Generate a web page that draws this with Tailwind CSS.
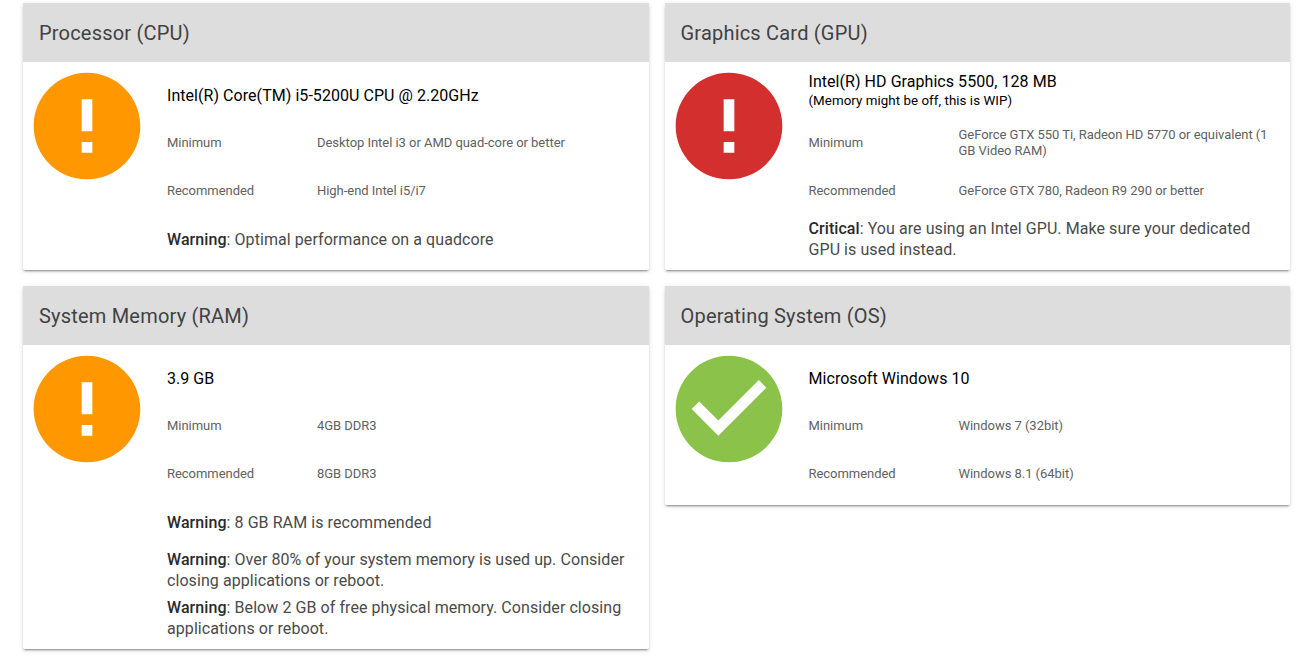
<!DOCTYPE html>
<html lang="en">
<head>
    <meta charset="UTF-8">
    <title>System Requirements</title>
    <script src="https://cdn.jsdelivr.net/npm/@tailwindcss/browser@4"></script>
</head>
<body class="bg-white font-['Roboto',sans-serif] min-h-[659px]">
    <div class="grid grid-cols-2 gap-x-4 gap-y-4 items-start pl-[23px] pr-[10px] pt-[3px]">

        <!-- CPU -->
        <section class="h-[267px] bg-white rounded-[2px] shadow-[0_2px_2px_0_rgba(0,0,0,.14),0_3px_1px_-2px_rgba(0,0,0,.2),0_1px_5px_0_rgba(0,0,0,.12)]">
            <h2 class="h-[59px] px-4 flex items-center bg-[#dddddd] text-[20px] tracking-[0.2px] text-[#424242]">Processor (CPU)</h2>
            <div class="flex">
                <svg class="w-32 h-32 shrink-0 fill-[#ff9800]" viewBox="0 0 24 24"><path d="M12 2C6.48 2 2 6.48 2 12s4.48 10 10 10 10-4.48 10-10S17.52 2 12 2zm1 15h-2v-2h2v2zm0-4h-2V7h2v6z"/></svg>
                <div class="flex-1 pl-4 pr-[10px] pt-[9px]">
                    <div class="h-12 pt-[15px] text-[16px] leading-[20px] tracking-[0.05px] text-black">Intel(R) Core(TM) i5-5200U CPU @ 2.20GHz</div>
                    <div class="grid grid-cols-[150px_1fr] auto-rows-[48px] items-center text-[13px] leading-4 tracking-[-0.04px] text-[#616161]">
                        <div>Minimum</div><div>Desktop Intel i3 or AMD quad-core or better</div>
                        <div>Recommended</div><div>High-end Intel i5/i7</div>
                    </div>
                    <p class="mt-[14px] text-[16px] leading-[21px] tracking-[0.07px] text-[#4a4a4a]"><b class="font-medium text-[#2a2a2a]">Warning</b>: Optimal performance on a quadcore</p>
                </div>
            </div>
        </section>

        <!-- GPU -->
        <section class="h-[267px] bg-white rounded-[2px] shadow-[0_2px_2px_0_rgba(0,0,0,.14),0_3px_1px_-2px_rgba(0,0,0,.2),0_1px_5px_0_rgba(0,0,0,.12)]">
            <h2 class="h-[59px] px-4 flex items-center bg-[#dddddd] text-[20px] tracking-[0.2px] text-[#424242]">Graphics Card (GPU)</h2>
            <div class="flex">
                <svg class="w-32 h-32 shrink-0 fill-[#d32f2f]" viewBox="0 0 24 24"><path d="M12 2C6.48 2 2 6.48 2 12s4.48 10 10 10 10-4.48 10-10S17.52 2 12 2zm1 15h-2v-2h2v2zm0-4h-2V7h2v6z"/></svg>
                <div class="flex-1 pl-4 pr-[10px] pt-[9px]">
                    <div class="h-12 pt-px text-[16px] tracking-[0.05px] text-black leading-[20px]">
                        <div>Intel(R) HD Graphics 5500, 128 MB</div>
                        <div class="text-[13.33px] leading-[18px]">(Memory might be off, this is WIP)</div>
                    </div>
                    <div class="grid grid-cols-[150px_1fr] auto-rows-[48px] items-center text-[13px] leading-4 tracking-[-0.04px] text-[#616161]">
                        <div>Minimum</div><div>GeForce GTX 550 Ti, Radeon HD 5770 or equivalent (1 GB Video RAM)</div>
                        <div>Recommended</div><div>GeForce GTX 780, Radeon R9 290 or better</div>
                    </div>
                    <p class="mt-[3px] text-[16px] leading-[21px] tracking-[0.07px] text-[#4a4a4a]"><b class="font-medium text-[#2a2a2a]">Critical</b>: You are using an Intel GPU. Make sure your dedicated GPU is used instead.</p>
                </div>
            </div>
        </section>

        <!-- RAM -->
        <section class="bg-white rounded-[2px] pb-[10px] shadow-[0_2px_2px_0_rgba(0,0,0,.14),0_3px_1px_-2px_rgba(0,0,0,.2),0_1px_5px_0_rgba(0,0,0,.12)]">
            <h2 class="h-[59px] px-4 flex items-center bg-[#dddddd] text-[20px] tracking-[0.2px] text-[#424242]">System Memory (RAM)</h2>
            <div class="flex">
                <svg class="w-32 h-32 shrink-0 fill-[#ff9800]" viewBox="0 0 24 24"><path d="M12 2C6.48 2 2 6.48 2 12s4.48 10 10 10 10-4.48 10-10S17.52 2 12 2zm1 15h-2v-2h2v2zm0-4h-2V7h2v6z"/></svg>
                <div class="flex-1 pl-4 pr-[10px] pt-[9px]">
                    <div class="h-12 pt-[15px] text-[16px] leading-[20px] tracking-[0.05px] text-black">3.9 GB</div>
                    <div class="grid grid-cols-[150px_1fr] auto-rows-[48px] items-center text-[13px] leading-4 tracking-[-0.04px] text-[#616161]">
                        <div>Minimum</div><div>4GB DDR3</div>
                        <div>Recommended</div><div>8GB DDR3</div>
                    </div>
                    <p class="mt-[14px] text-[16px] leading-[21px] tracking-[0.07px] text-[#4a4a4a]"><b class="font-medium text-[#2a2a2a]">Warning</b>: 8 GB RAM is recommended</p>
                    <p class="mt-4 text-[16px] leading-[21px] tracking-[0.07px] text-[#4a4a4a]"><b class="font-medium text-[#2a2a2a]">Warning</b>: Over 80% of your system memory is used up. Consider closing applications or reboot.</p>
                    <p class="mt-[6px] text-[16px] leading-[21px] tracking-[0.07px] text-[#4a4a4a]"><b class="font-medium text-[#2a2a2a]">Warning</b>: Below 2 GB of free physical memory. Consider closing applications or reboot.</p>
                </div>
            </div>
        </section>

        <!-- OS -->
        <section class="h-[219px] bg-white rounded-[2px] shadow-[0_2px_2px_0_rgba(0,0,0,.14),0_3px_1px_-2px_rgba(0,0,0,.2),0_1px_5px_0_rgba(0,0,0,.12)]">
            <h2 class="h-[59px] px-4 flex items-center bg-[#dddddd] text-[20px] tracking-[0.2px] text-[#424242]">Operating System (OS)</h2>
            <div class="flex">
                <svg class="w-32 h-32 shrink-0 fill-[#8bc34a]" viewBox="0 0 24 24"><path d="M12 2C6.48 2 2 6.48 2 12s4.48 10 10 10 10-4.48 10-10S17.52 2 12 2zm-2 15l-5-5 1.41-1.41L10 14.17l7.59-7.59L19 8l-9 9z"/></svg>
                <div class="flex-1 pl-4 pr-[10px] pt-[9px]">
                    <div class="h-12 pt-[15px] text-[16px] leading-[20px] tracking-[0.05px] text-black">Microsoft Windows 10</div>
                    <div class="grid grid-cols-[150px_1fr] auto-rows-[48px] items-center text-[13px] leading-4 tracking-[-0.04px] text-[#616161]">
                        <div>Minimum</div><div>Windows 7 (32bit)</div>
                        <div>Recommended</div><div>Windows 8.1 (64bit)</div>
                    </div>
                </div>
            </div>
        </section>
    </div>
</body>
</html>
